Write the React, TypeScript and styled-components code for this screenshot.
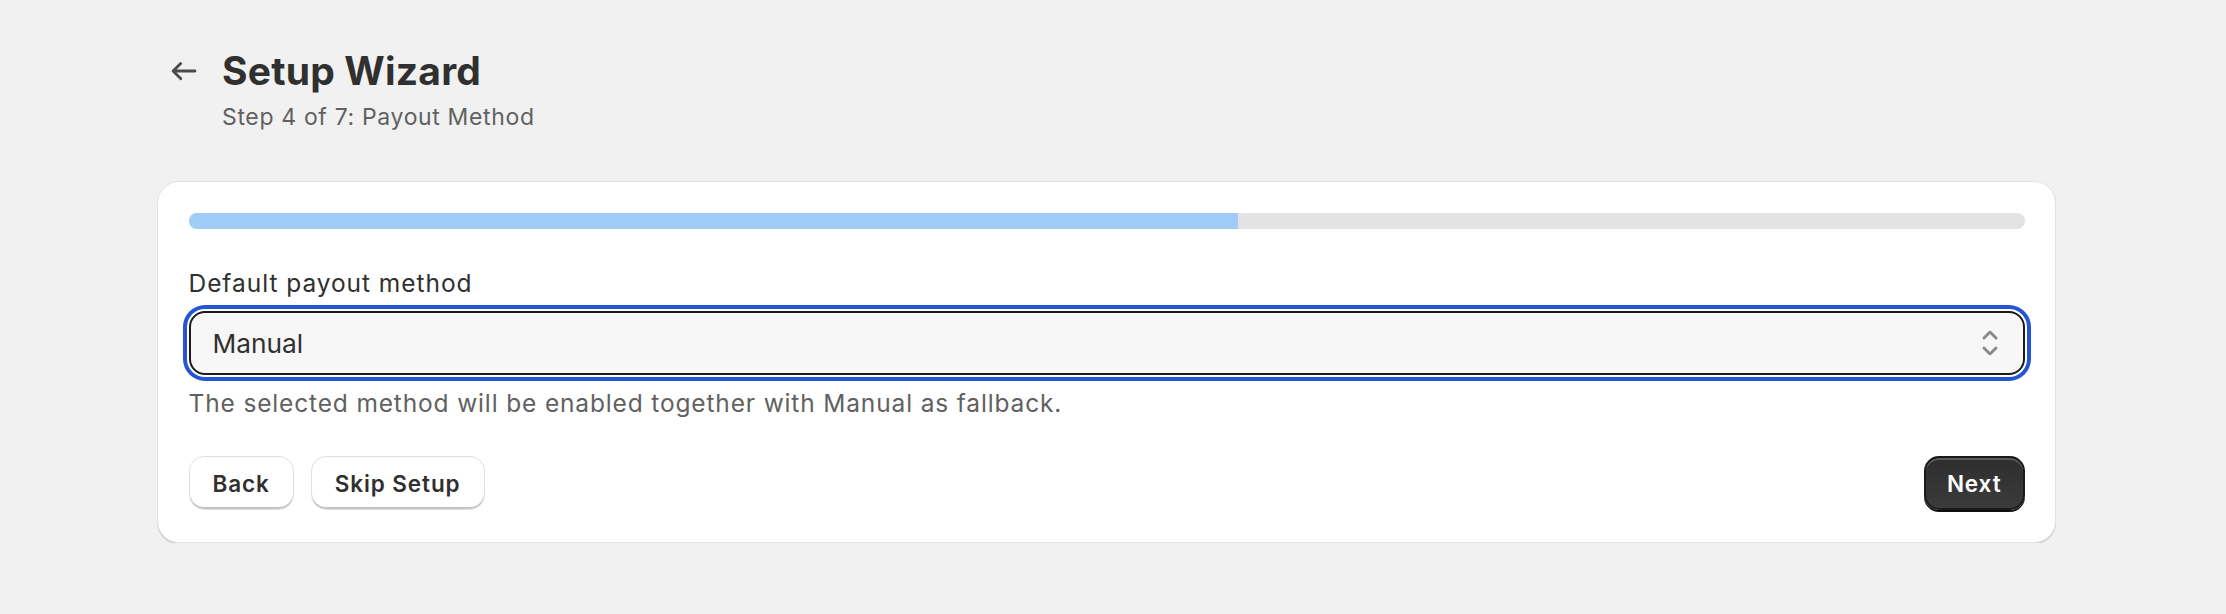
import styled, { createGlobalStyle } from 'styled-components';

const STEP = 4;
const TOTAL = 7;

const GlobalStyle = createGlobalStyle`
  html, body {
    margin: 0;
    padding: 0;
    background: #f1f1f1;
    font-family: Inter, "Noto Sans", sans-serif;
    color: #303030;
  }
`;

const Page = styled.div`
  padding: 47px 0 0 157px;
  width: 1899px;
`;

const Header = styled.div`
  display: flex;
  align-items: flex-start;
  gap: 19px;
  padding-left: 8px;
`;

const BackIcon = styled.svg`
  width: 38px;
  height: 38px;
  margin-top: 5px;
  fill: #4a4a4a;
  flex-shrink: 0;
`;

const Titles = styled.div`
  display: flex;
  flex-direction: column;
`;

const Title = styled.h1`
  margin: 0;
  font-size: 39px;
  line-height: 48px;
  font-weight: 700;
  color: #303030;
  letter-spacing: 0.2px;
`;

const Subtitle = styled.div`
  margin-top: 6px;
  font-size: 23px;
  line-height: 32px;
  letter-spacing: 0.65px;
  color: #616161;
`;

const Card = styled.div`
  margin-top: 48px;
  background: #fff;
  border: 1.5px solid #e3e3e3;
  border-radius: 22px;
  box-shadow: 0 1.5px 0 #d0d0d0;
  padding: 31px 30.5px 32px;
`;

const Track = styled.div`
  height: 16px;
  border-radius: 8px;
  background: #e3e3e3;
  overflow: hidden;
`;

const Fill = styled.div`
  height: 100%;
  background: #9fcdf8;
`;

const Label = styled.div`
  margin-top: 38px;
  font-size: 24.5px;
  line-height: 32px;
  letter-spacing: 0.95px;
  color: #303030;
`;

const Select = styled.div`
  margin-top: 12px;
  height: 64px;
  box-sizing: border-box;
  border: 2.5px solid #1a1a1a;
  border-radius: 16px;
  background: #f7f7f7;
  box-shadow: 0 0 0 2px #fff, 0 0 0 6px #2456d3;
  display: flex;
  align-items: center;
  justify-content: space-between;
  padding: 0 13px 0 22px;
  font-size: 26.3px;
  color: #303030;
`;

const SelectIcon = styled.svg`
  width: 40px;
  height: 40px;
  fill: #8a8a8a;
`;

const Hint = styled.div`
  margin-top: 12px;
  font-size: 24.5px;
  line-height: 32px;
  letter-spacing: 0.85px;
  color: #616161;
`;

const Actions = styled.div`
  margin-top: 37px;
  display: flex;
  align-items: center;
  justify-content: space-between;
`;

const Group = styled.div`
  display: flex;
  gap: 17px;
`;

const Button = styled.button<{ $primary?: boolean }>`
  height: 54px;
  box-sizing: border-box;
  padding: 0 ${(p) => (p.$primary ? 21 : 23)}px;
  border-radius: 15px;
  font-family: Inter, "Noto Sans", sans-serif;
  font-size: 22.5px;
  font-weight: 600;
  letter-spacing: 0.9px;
  cursor: pointer;
  color: ${(p) => (p.$primary ? '#fff' : '#303030')};
  background: ${(p) => (p.$primary ? 'linear-gradient(#2e2e2e, #3b3b3b)' : '#fff')};
  border: ${(p) => (p.$primary ? '2px solid #1a1a1a' : '1.5px solid #e0e0e0')};
  box-shadow: ${(p) =>
    p.$primary
      ? 'inset 0 2px 0 rgba(255,255,255,0.22), 0 2px 0 #111'
      : 'inset 0 -2px 0 #c4c4c4'};
`;

export default function App() {
  return (
    <>
      <GlobalStyle />
      <Page>
        <Header>
          <BackIcon viewBox="0 0 20 20">
            <path d="M16.5 10a.75.75 0 0 1-.75.75h-9.69l2.72 2.72a.75.75 0 1 1-1.060 1.06l-4-4a.75.75 0 0 1 0-1.06l4-4a.75.75 0 0 1 1.06 1.06l-2.72 2.72h9.69a.75.75 0 0 1 .75.75Z" />
          </BackIcon>
          <Titles>
            <Title>Setup Wizard</Title>
            <Subtitle>Step {STEP} of {TOTAL}: Payout Method</Subtitle>
          </Titles>
        </Header>
        <Card>
          <Track>
            <Fill style={{ width: `${(STEP / TOTAL) * 100}%` }} />
          </Track>
          <Label>Default payout method</Label>
          <Select>
            <span>Manual</span>
            <SelectIcon viewBox="0 0 20 20">
              <path d="M10.884 4.323a1.25 1.25 0 0 0-1.768 0l-2.646 2.647a.75.75 0 0 0 1.06 1.06l2.47-2.47 2.47 2.47a.75.75 0 1 0 1.06-1.06l-2.646-2.647Z" />
              <path d="m13.53 13.03-2.646 2.647a1.25 1.25 0 0 1-1.768 0l-2.646-2.647a.75.75 0 0 1 1.06-1.06l2.47 2.47 2.47-2.47a.75.75 0 0 1 1.06 1.06Z" />
            </SelectIcon>
          </Select>
          <Hint>The selected method will be enabled together with Manual as fallback.</Hint>
          <Actions>
            <Group>
              <Button>Back</Button>
              <Button>Skip Setup</Button>
            </Group>
            <Button $primary>Next</Button>
          </Actions>
        </Card>
      </Page>
    </>
  );
}
